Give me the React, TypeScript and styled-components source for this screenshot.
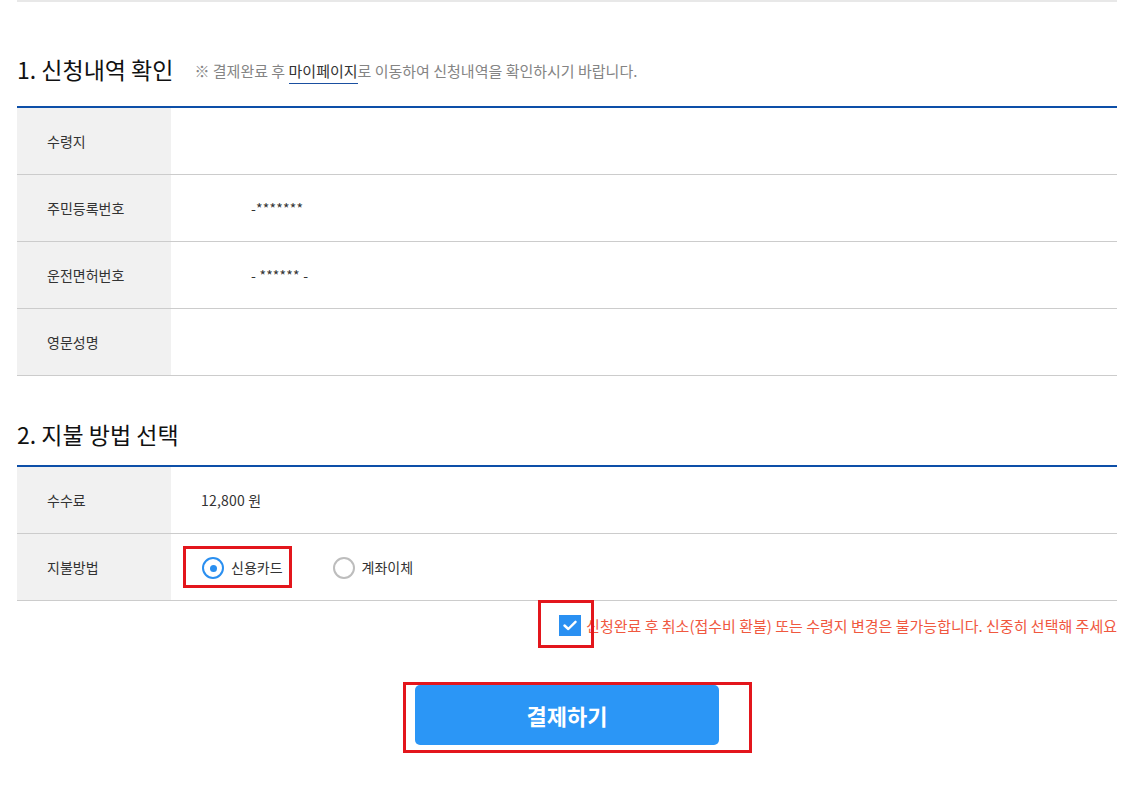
import React from "react";
import styled, { createGlobalStyle } from "styled-components";

const GlobalStyle = createGlobalStyle`
  html, body { margin: 0; padding: 0; background: #fff; }
  body {
    font-family: "Noto Sans CJK KR", "Noto Sans", sans-serif;
    color: #222;
  }
`;

const Page = styled.div`
  width: 1100px;
  margin-left: 17px;
  padding-bottom: 40px;
`;

const TopRule = styled.div`
  height: 2px;
  background: #e8e8e8;
`;

const HeadingRow = styled.div<{ $top: number; $bottom: number }>`
  display: flex;
  align-items: center;
  height: 32px;
  margin-top: ${(p) => p.$top}px;
  margin-bottom: ${(p) => p.$bottom}px;
`;

const Heading = styled.h2`
  margin: 0;
  font-size: 23px;
  font-weight: 400;
  color: #111;
  line-height: 32px;
`;

const Note = styled.span`
  margin-left: 21px;
  margin-top: 2px;
  font-size: 15px;
  color: #848484;
`;

const NoteLink = styled.span`
  color: #333;
  border-bottom: 1px solid #1a4fa0;
  padding-bottom: 2px;
`;

const Table = styled.div`
  border-top: 2px solid #0d4fa8;
`;

const Row = styled.div`
  display: grid;
  grid-template-columns: 154px 1fr;
  height: 66px;
  border-bottom: 1px solid #cccccc;
`;

const Label = styled.div`
  display: flex;
  align-items: center;
  padding-left: 30px;
  background: #f1f1f1;
  font-size: 14px;
  color: #333;
`;

const Value = styled.div<{ $indent: number }>`
  display: flex;
  align-items: center;
  padding-left: ${(p) => p.$indent}px;
  font-size: 14px;
  color: #333;
  letter-spacing: 0.2px;
`;

const RadioGroup = styled.div`
  display: flex;
  align-items: center;
  margin-left: 12px;
`;

const RadioLabel = styled.label<{ $boxed?: boolean }>`
  display: flex;
  align-items: center;
  gap: 7px;
  height: 42px;
  box-sizing: border-box;
  padding-left: ${(p) => (p.$boxed ? 16 : 0)}px;
  padding-right: ${(p) => (p.$boxed ? 6 : 0)}px;
  border: ${(p) => (p.$boxed ? "3px solid #e3161c" : "none")};
  margin-right: ${(p) => (p.$boxed ? 41 : 0)}px;
  font-size: 14px;
  color: #333;
  cursor: pointer;
`;

const RadioCircle = styled.span<{ $checked?: boolean }>`
  width: 22px;
  height: 22px;
  box-sizing: border-box;
  border-radius: 50%;
  border: 2px solid ${(p) => (p.$checked ? "#2a8ff0" : "#bdbdbd")};
  display: flex;
  align-items: center;
  justify-content: center;
  margin-top: 2px;
  &::after {
    content: "";
    display: ${(p) => (p.$checked ? "block" : "none")};
    width: 7px;
    height: 7px;
    border-radius: 50%;
    background: #2a8ff0;
  }
`;

const NoticeRow = styled.div`
  display: flex;
  justify-content: flex-end;
  align-items: center;
  height: 48px;
`;

const CheckWrap = styled.span`
  position: relative;
  display: flex;
  margin-right: 5px;
`;

const CheckBox = styled.span`
  width: 22px;
  height: 21px;
  background: #2a90f2;
  display: flex;
  align-items: center;
  justify-content: center;
`;

const CheckHighlight = styled.span`
  position: absolute;
  left: -21px;
  top: -15px;
  width: 56px;
  height: 48px;
  box-sizing: border-box;
  border: 3px solid #e3161c;
  pointer-events: none;
`;

const NoticeText = styled.span`
  font-size: 15px;
  color: #f0583f;
`;

const ButtonRow = styled.div`
  display: flex;
  justify-content: center;
  margin-top: 36px;
`;

const ButtonWrap = styled.div`
  position: relative;
`;

const PayButton = styled.button`
  width: 304px;
  height: 60px;
  border: none;
  border-radius: 5px;
  background: #2b96f6;
  color: #fff;
  font-family: "Noto Sans CJK KR", sans-serif;
  font-size: 22px;
  font-weight: 700;
  cursor: pointer;
`;

const ButtonHighlight = styled.span`
  position: absolute;
  left: -12px;
  top: -3px;
  width: 349px;
  height: 71px;
  box-sizing: border-box;
  border: 3px solid #e3161c;
  pointer-events: none;
`;

export default function App() {
  return (
    <>
      <GlobalStyle />
      <Page>
        <TopRule />
        <HeadingRow $top={51} $bottom={21}>
          <Heading>1. 신청내역 확인</Heading>
          <Note>
            ※ 결제완료 후 <NoteLink>마이페이지</NoteLink>로 이동하여 신청내역을 확인하시기 바랍니다.
          </Note>
        </HeadingRow>
        <Table>
          <Row>
            <Label>수령지</Label>
            <Value $indent={80}></Value>
          </Row>
          <Row>
            <Label>주민등록번호</Label>
            <Value $indent={80}>-*******</Value>
          </Row>
          <Row>
            <Label>운전면허번호</Label>
            <Value $indent={80}>- ****** -</Value>
          </Row>
          <Row>
            <Label>영문성명</Label>
            <Value $indent={80}></Value>
          </Row>
        </Table>

        <HeadingRow $top={42} $bottom={15}>
          <Heading>2. 지불 방법 선택</Heading>
        </HeadingRow>
        <Table>
          <Row>
            <Label>수수료</Label>
            <Value $indent={30}>12,800 원</Value>
          </Row>
          <Row>
            <Label>지불방법</Label>
            <RadioGroup>
              <RadioLabel $boxed>
                <RadioCircle $checked />
                신용카드
              </RadioLabel>
              <RadioLabel>
                <RadioCircle />
                계좌이체
              </RadioLabel>
            </RadioGroup>
          </Row>
        </Table>

        <NoticeRow>
          <CheckWrap>
            <CheckBox>
              <svg width="14" height="11" viewBox="0 0 14 11">
                <path
                  d="M1.5 5.5 L5.3 9 L12.5 1.8"
                  fill="none"
                  stroke="#fff"
                  strokeWidth="2.4"
                  strokeLinecap="round"
                  strokeLinejoin="round"
                />
              </svg>
            </CheckBox>
            <CheckHighlight />
          </CheckWrap>
          <NoticeText>
            신청완료 후 취소(접수비 환불) 또는 수령지 변경은 불가능합니다. 신중히 선택해 주세요
          </NoticeText>
        </NoticeRow>

        <ButtonRow>
          <ButtonWrap>
            <PayButton>결제하기</PayButton>
            <ButtonHighlight />
          </ButtonWrap>
        </ButtonRow>
      </Page>
    </>
  );
}
